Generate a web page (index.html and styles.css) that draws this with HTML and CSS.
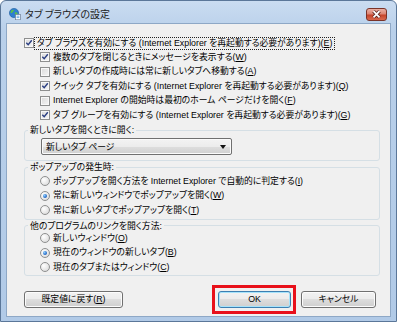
FILE: index.html
```html
<!DOCTYPE html>
<html lang="ja">
<head>
    <meta charset="UTF-8">
    <title>タブ ブラウズの設定</title>
<link rel="stylesheet" href="styles.css">
</head>
<body>
    <div class="window">
        <div class="titlebar">
            <svg class="app-icon" width="12" height="12" viewBox="0 0 12 12">
                <circle cx="5" cy="5" r="4.6" fill="#2f7fd0" stroke="#1c5a9c" stroke-width="0.6"/>
                <path d="M2 3 C3 1.5 4.5 1.5 5 2.5 C4.6 3.6 3.6 3.4 3.4 4.6 C3 5.4 2 5 1.5 4.4 Z" fill="#5cc24a"/>
                <path d="M5.8 4.5 C7 4 8.4 4.6 8.6 5.8 C7.8 7.4 6.4 7.6 5.9 6.6 Z" fill="#5cc24a"/>
                <rect x="6.5" y="6.5" width="5" height="5.3" fill="#fff" stroke="#6a7d96" stroke-width="0.7"/>
                <path d="M7.6 8.2 H10.4 M7.6 9.6 H10.4" stroke="#3a8ed8" stroke-width="0.7"/>
            </svg>
            <span class="title">タブ ブラウズの設定</span>
            <span class="close-btn">
                <svg width="21" height="13" viewBox="0 0 21 13">
                    <path d="M7.5 3.2 L13.5 9.4 M13.5 3.2 L7.5 9.4" stroke="#5a241c" stroke-width="3.4"/>
                    <path d="M7.5 3.2 L13.5 9.4 M13.5 3.2 L7.5 9.4" stroke="#fff" stroke-width="1.8"/>
                </svg>
            </span>
        </div>

        <div class="client">
            <div class="row main-row">
                <span class="check"><svg width="8" height="8" viewBox="0 0 8 8"><path d="M1.3 3.8 L3.2 5.8 L6.8 1.2" fill="none" stroke="#2b3f82" stroke-width="1.4"/></svg></span>
                <span class="label focused">タブ ブラウズを有効にする (Internet Explorer を再起動する必要があります)(<u>E</u>)</span>
            </div>

            <div class="sub-options">
                <div class="row">
                    <span class="check"><svg width="8" height="8" viewBox="0 0 8 8"><path d="M1.3 3.8 L3.2 5.8 L6.8 1.2" fill="none" stroke="#2b3f82" stroke-width="1.4"/></svg></span>
                    <span class="label">複数のタブを閉じるときにメッセージを表示する(<u>W</u>)</span>
                </div>
                <div class="row">
                    <span class="check"></span>
                    <span class="label">新しいタブの作成時には常に新しいタブへ移動する(<u>A</u>)</span>
                </div>
                <div class="row">
                    <span class="check"><svg width="8" height="8" viewBox="0 0 8 8"><path d="M1.3 3.8 L3.2 5.8 L6.8 1.2" fill="none" stroke="#2b3f82" stroke-width="1.4"/></svg></span>
                    <span class="label">クイック タブを有効にする (Internet Explorer を再起動する必要があります)(<u>Q</u>)</span>
                </div>
                <div class="row">
                    <span class="check"></span>
                    <span class="label">Internet Explorer の開始時は最初のホーム ページだけを開く(<u>F</u>)</span>
                </div>
                <div class="row">
                    <span class="check"><svg width="8" height="8" viewBox="0 0 8 8"><path d="M1.3 3.8 L3.2 5.8 L6.8 1.2" fill="none" stroke="#2b3f82" stroke-width="1.4"/></svg></span>
                    <span class="label">タブ グループを有効にする (Internet Explorer を再起動する必要があります)(<u>G</u>)</span>
                </div>
            </div>

            <fieldset class="group group-newtab">
                <legend>新しいタブを開くときに開く:</legend>
                <div class="combo">
                    <span>新しいタブ ページ</span>
                    <span class="combo-arrow"></span>
                </div>
            </fieldset>

            <fieldset class="group group-popup">
                <legend>ポップアップの発生時:</legend>
                <div class="radio-list">
                    <div class="row"><span class="radio"></span><span class="label">ポップアップを開く方法を Internet Explorer で自動的に判定する(<u>I</u>)</span></div>
                    <div class="row"><span class="radio on"></span><span class="label">常に新しいウィンドウでポップアップを開く(<u>W</u>)</span></div>
                    <div class="row"><span class="radio"></span><span class="label">常に新しいタブでポップアップを開く(<u>T</u>)</span></div>
                </div>
            </fieldset>

            <fieldset class="group group-links">
                <legend>他のプログラムのリンクを開く方法:</legend>
                <div class="radio-list">
                    <div class="row"><span class="radio"></span><span class="label">新しいウィンドウ(<u>O</u>)</span></div>
                    <div class="row"><span class="radio on"></span><span class="label">現在のウィンドウの新しいタブ(<u>B</u>)</span></div>
                    <div class="row"><span class="radio"></span><span class="label">現在のタブまたはウィンドウ(<u>C</u>)</span></div>
                </div>
            </fieldset>

            <div class="buttons">
                <span class="btn btn-reset">既定値に戻す(<u>R</u>)</span>
                <span class="highlight"><span class="btn btn-default">OK</span></span>
                <span class="btn btn-cancel">キャンセル</span>
            </div>
        </div>
    </div>
</body>
</html>
```

FILE: styles.css
```css
* {
    box-sizing: border-box;
}

body {
    margin: 0;
    font-family: "Liberation Sans", "Noto Sans CJK JP", sans-serif;
    font-size: 8.8px;
    font-feature-settings: "palt";
    color: #000;
    background: #fff;
}

.window {
    width: 397px;
    height: 322px;
    display: flex;
    flex-direction: column;
    padding: 0 6px 5px;
    border: 1px solid #5b7799;
    border-radius: 6px 6px 0 0;
    background: linear-gradient(to bottom, #cadcf1 0%, #b9d0ea 30px, #b1cae7 100%);
}

.titlebar {
    height: 23px;
    display: flex;
    align-items: flex-start;
    padding-left: 2px;
}

.app-icon {
    margin-top: 7px;
    flex: none;
}

.title {
    margin: 6px 0 0 4px;
    font-family: "Noto Sans CJK JP", sans-serif;
    font-size: 10px;
    line-height: 14px;
    color: #1b1b1b;
}

.close-btn {
    margin: 7px 3px 0 auto;
    width: 21px;
    height: 13px;
    border: 1px solid #7a3328;
    border-radius: 3px;
    background: linear-gradient(to bottom, #eab0a4 0%, #dc8472 45%, #c5442b 55%, #d9694d 100%);
    display: flex;
    align-items: center;
    justify-content: center;
    overflow: hidden;
}

.close-btn svg {
    flex: none;
}

.client {
    flex: 1;
    background: #f0f0f0;
    box-shadow: 0 0 0 1px #8ea8c6;
    padding: 12px 10px 0 17px;
}

.row {
    display: flex;
    align-items: center;
    height: 14.5px;
    white-space: nowrap;
}

.main-row {
    height: 14px;
}

.label {
    line-height: 11px;
}

.focused {
    outline: 1px dotted #222;
    padding: 0 2px;
    margin-left: 1px;
}

.check {
    flex: none;
    width: 10px;
    height: 10px;
    margin-right: 3px;
    border: 1px solid #8e8f8f;
    background: linear-gradient(135deg, #d9d9d9 0%, #f6f6f6 100%);
    box-shadow: inset 0 0 0 1px #f8f8f8;
    display: flex;
    align-items: center;
    justify-content: center;
}

.main-row .check {
    margin-right: 0;
}

.sub-options {
    padding-left: 16px;
}

.group {
    width: 356px;
    margin: 0;
    padding: 0 0 0 3px;
    border: 1px solid #d5dfe5;
    border-radius: 3px;
}

.group legend {
    padding: 0 2px;
    line-height: 10px;
}

.group-newtab {
    margin-top: 2.5px;
    padding-bottom: 5px;
}

.group-popup {
    margin-top: 1px;
    padding-bottom: 1px;
}

.group-links {
    margin-top: 1px;
}

.combo {
    width: 191px;
    height: 17px;
    margin: 3px 0 0 13px;
    padding-left: 4px;
    display: flex;
    align-items: center;
    border: 1px solid #707070;
    border-radius: 2px;
    background: linear-gradient(to bottom, #f3f3f3 0%, #ececec 50%, #dedede 50%, #d0d0d0 100%);
    box-shadow: inset 0 0 0 1px #fbfbfb;
}

.combo-arrow {
    margin: 1px 5px 0 auto;
    border-left: 3.5px solid transparent;
    border-right: 3.5px solid transparent;
    border-top: 4px solid #111;
}

.radio-list {
    margin-left: 12px;
}

.group-popup .radio-list {
    margin-top: 2px;
}

.group-links .radio-list {
    margin-top: 0.5px;
}

.radio {
    flex: none;
    width: 10px;
    height: 10px;
    margin-right: 3px;
    border: 1px solid #8e8f8f;
    border-radius: 50%;
    background: radial-gradient(circle at 35% 35%, #ffffff 0%, #e6e6e6 60%, #cfcfcf 100%);
    display: flex;
    align-items: center;
    justify-content: center;
}

.radio.on::after {
    content: "";
    width: 4px;
    height: 4px;
    border-radius: 50%;
    background: radial-gradient(circle at 35% 35%, #8fd0ff 0%, #2a6fc9 60%, #1b4f9c 100%);
}

.buttons {
    margin-top: 9.5px;
    display: flex;
    align-items: center;
}

.btn {
    height: 17px;
    display: flex;
    align-items: center;
    justify-content: center;
    border: 1px solid #707070;
    border-radius: 3px;
    background: linear-gradient(to bottom, #f2f2f2 0%, #ebebeb 50%, #dddddd 50%, #cfcfcf 100%);
    box-shadow: inset 0 0 0 1px #fcfcfc;
    line-height: 11px;
}

.btn-reset {
    width: 99px;
}

.highlight {
    margin-left: 89px;
    padding: 3px 2px 3px 3px;
    border: 3px solid #e8101a;
}

.btn-default {
    width: 73px;
    border-color: #3c7fb1;
    box-shadow: inset 0 0 0 1px #a6e3fb;
}

.btn-cancel {
    width: 75px;
    margin-left: 5px;
}
```
